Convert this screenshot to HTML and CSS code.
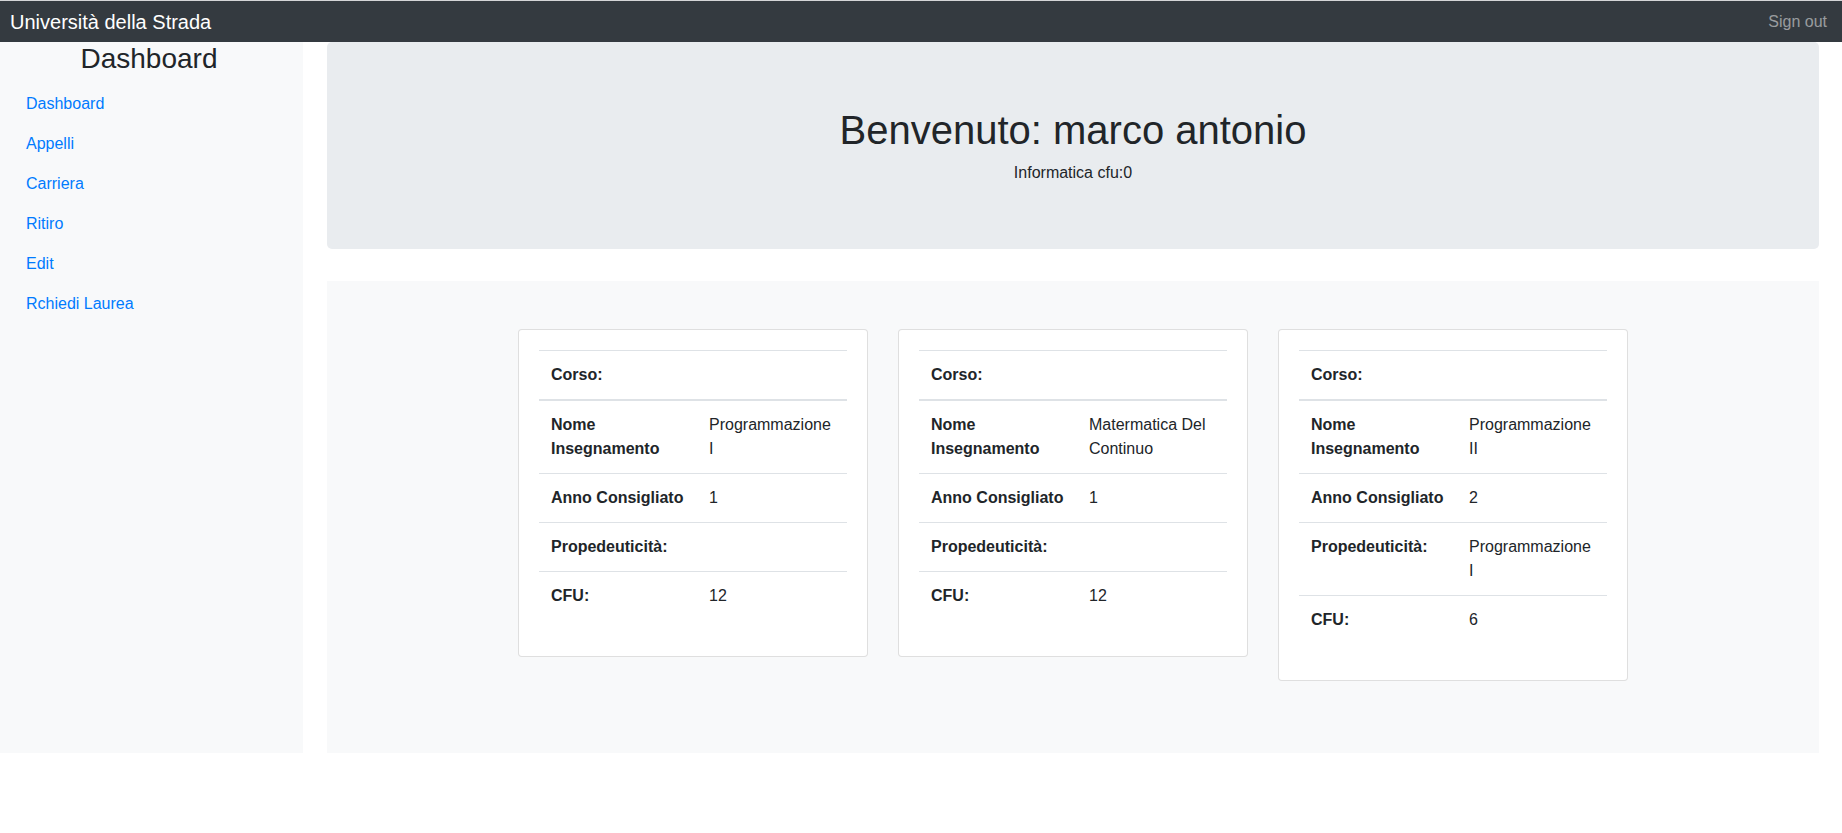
FILE: index.html
```html
<!DOCTYPE html>
<html lang="it">
<head>
<meta charset="utf-8">
<title>Università della Strada</title>
<link rel="stylesheet" href="styles.css">
</head>
<body>
<header class="navbar">
  <a class="brand" href="#">Università della Strada</a>
  <a class="signout" href="#">Sign out</a>
</header>
<div class="layout">
  <nav class="sidebar">
    <h3 class="sidebar-title">Dashboard</h3>
    <ul class="nav">
      <li><a href="#">Dashboard</a></li>
      <li><a href="#">Appelli</a></li>
      <li><a href="#">Carriera</a></li>
      <li><a href="#">Ritiro</a></li>
      <li><a href="#">Edit</a></li>
      <li><a href="#">Rchiedi Laurea</a></li>
    </ul>
  </nav>
  <main class="main">
    <section class="jumbotron">
      <h1>Benvenuto: marco antonio</h1>
      <p>Informatica cfu:0</p>
    </section>
    <section class="cards">
      <div class="card">
        <table>
          <colgroup><col class="c1"><col></colgroup>
          <thead><tr><th>Corso:</th><th></th></tr></thead>
          <tbody>
            <tr><th>Nome Insegnamento</th><td>Programmazione I</td></tr>
            <tr><th>Anno Consigliato</th><td>1</td></tr>
            <tr><th>Propedeuticità:</th><td></td></tr>
            <tr><th>CFU:</th><td>12</td></tr>
          </tbody>
        </table>
      </div>
      <div class="card">
        <table>
          <colgroup><col class="c1"><col></colgroup>
          <thead><tr><th>Corso:</th><th></th></tr></thead>
          <tbody>
            <tr><th>Nome Insegnamento</th><td>Matermatica Del Continuo</td></tr>
            <tr><th>Anno Consigliato</th><td>1</td></tr>
            <tr><th>Propedeuticità:</th><td></td></tr>
            <tr><th>CFU:</th><td>12</td></tr>
          </tbody>
        </table>
      </div>
      <div class="card">
        <table>
          <colgroup><col class="c1"><col></colgroup>
          <thead><tr><th>Corso:</th><th></th></tr></thead>
          <tbody>
            <tr><th>Nome Insegnamento</th><td>Programmazione II</td></tr>
            <tr><th>Anno Consigliato</th><td>2</td></tr>
            <tr><th>Propedeuticità:</th><td>Programmazione I</td></tr>
            <tr><th>CFU:</th><td>6</td></tr>
          </tbody>
        </table>
      </div>
    </section>
  </main>
</div>
</body>
</html>
```

FILE: styles.css
```css
* { box-sizing: border-box; }

body {
  margin: 0;
  font-family: "Liberation Sans", Arial, sans-serif;
  font-size: 16px;
  line-height: 1.5;
  color: #212529;
  background: #fff;
}

.navbar {
  display: flex;
  justify-content: space-between;
  align-items: center;
  height: 42px;
  border-top: 1px solid #d4d5d7;
  background: #343a40;
  padding: 0 15px 0 10px;
}

.brand {
  color: #fff;
  font-size: 20px;
  line-height: 30px;
  text-decoration: none;
}

.signout {
  color: rgba(255, 255, 255, 0.5);
  text-decoration: none;
}

.layout {
  display: flex;
  align-items: stretch;
}

.sidebar {
  flex: none;
  width: 303px;
  background: #f8f9fa;
}

.sidebar-title {
  margin: 0 0 8px;
  padding-right: 5px;
  font-size: 28px;
  font-weight: 500;
  line-height: 1.2;
  text-align: center;
}

.nav {
  list-style: none;
  margin: 0;
  padding: 0 0 0 10px;
}

.nav a {
  display: block;
  padding: 8px 16px;
  color: #007bff;
  text-decoration: none;
}

.main {
  flex: 1;
  margin: 0 23px 0 24px;
}

.jumbotron {
  background: #e9ecef;
  border-radius: 5px;
  padding: 64px 32px;
  margin-bottom: 32px;
  text-align: center;
}

.jumbotron h1 {
  margin: 0 0 7px;
  font-size: 40px;
  font-weight: 500;
  line-height: 1.2;
}

.jumbotron p {
  margin: 0;
}

.cards {
  display: flex;
  justify-content: center;
  align-items: flex-start;
  gap: 30px;
  background: #f8f9fa;
  padding: 48px 0;
}

.card {
  width: 350px;
  background: #fff;
  border: 1px solid rgba(0, 0, 0, 0.125);
  border-radius: 4px;
  padding: 20px;
  margin-bottom: 24px;
}

.card table {
  width: 100%;
  border-collapse: collapse;
  table-layout: fixed;
  margin-bottom: 16px;
}

.card col.c1 { width: 158px; }

.card th,
.card td {
  padding: 12px;
  border-top: 1px solid #dee2e6;
  text-align: left;
  vertical-align: top;
}

.card th { font-weight: 700; }

.card thead th {
  border-bottom: 2px solid #dee2e6;
}
```
